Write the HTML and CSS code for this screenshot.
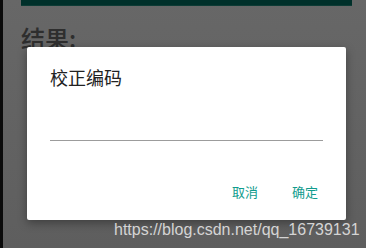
FILE: index.html
```html
<!DOCTYPE html>
<html lang="zh">
<head>
<meta charset="utf-8">
<link rel="stylesheet" href="styles.css">
</head>
<body>
<div class="screen">
  <div class="edge"></div>
  <div class="app">
    <div class="toolbar"></div>
    <div class="result">结果:</div>
  </div>
  <div class="dialog">
    <div class="title">校正编码</div>
    <div class="field"></div>
    <div class="actions">
      <span class="btn">取消</span>
      <span class="btn">确定</span>
    </div>
  </div>
  <div class="watermark">https://blog.csdn.net/qq_16739131</div>
</div>
</body>
</html>
```
FILE: styles.css
```css
html, body {
  margin: 0;
  padding: 0;
}
body {
  width: 366px;
  height: 248px;
  overflow: hidden;
  font-family: "Noto Sans CJK SC", "Noto Sans", sans-serif;
}
.screen {
  position: relative;
  display: flex;
  width: 366px;
  height: 248px;
  background: linear-gradient(#676767, #5e5e5e);
}
.edge {
  width: 3px;
  background: #0b0b0b;
}
.app {
  flex: 1;
  padding-left: 18px;
  padding-right: 14px;
}
.toolbar {
  height: 5px;
  background: #00302a;
  border-bottom: 1px solid #0d3b35;
}
.result {
  margin-top: 18px;
  font-size: 24px;
  line-height: 28px;
  font-weight: 500;
  color: #2e2e2e;
}
.dialog {
  position: absolute;
  left: 27px;
  top: 47px;
  width: 319px;
  height: 173px;
  background: #fff;
  border-radius: 2px;
  box-shadow: 0 3px 10px rgba(0,0,0,0.35);
  box-sizing: border-box;
  padding: 19px 23px 0 23px;
  display: flex;
  flex-direction: column;
}
.title {
  font-size: 18px;
  line-height: 22px;
  color: #222;
}
.field {
  margin-top: 52px;
  height: 1px;
  background: #9c9c9c;
}
.actions {
  display: flex;
  justify-content: flex-end;
  gap: 34px;
  margin-top: 43px;
  padding-right: 5px;
}
.btn {
  font-size: 13px;
  line-height: 16px;
  color: #119c8e;
}
.watermark {
  position: absolute;
  left: 114px;
  top: 220px;
  font-family: "Liberation Sans", Arial, sans-serif;
  font-size: 16px;
  line-height: 20px;
  color: #d4d4d4;
}
```
